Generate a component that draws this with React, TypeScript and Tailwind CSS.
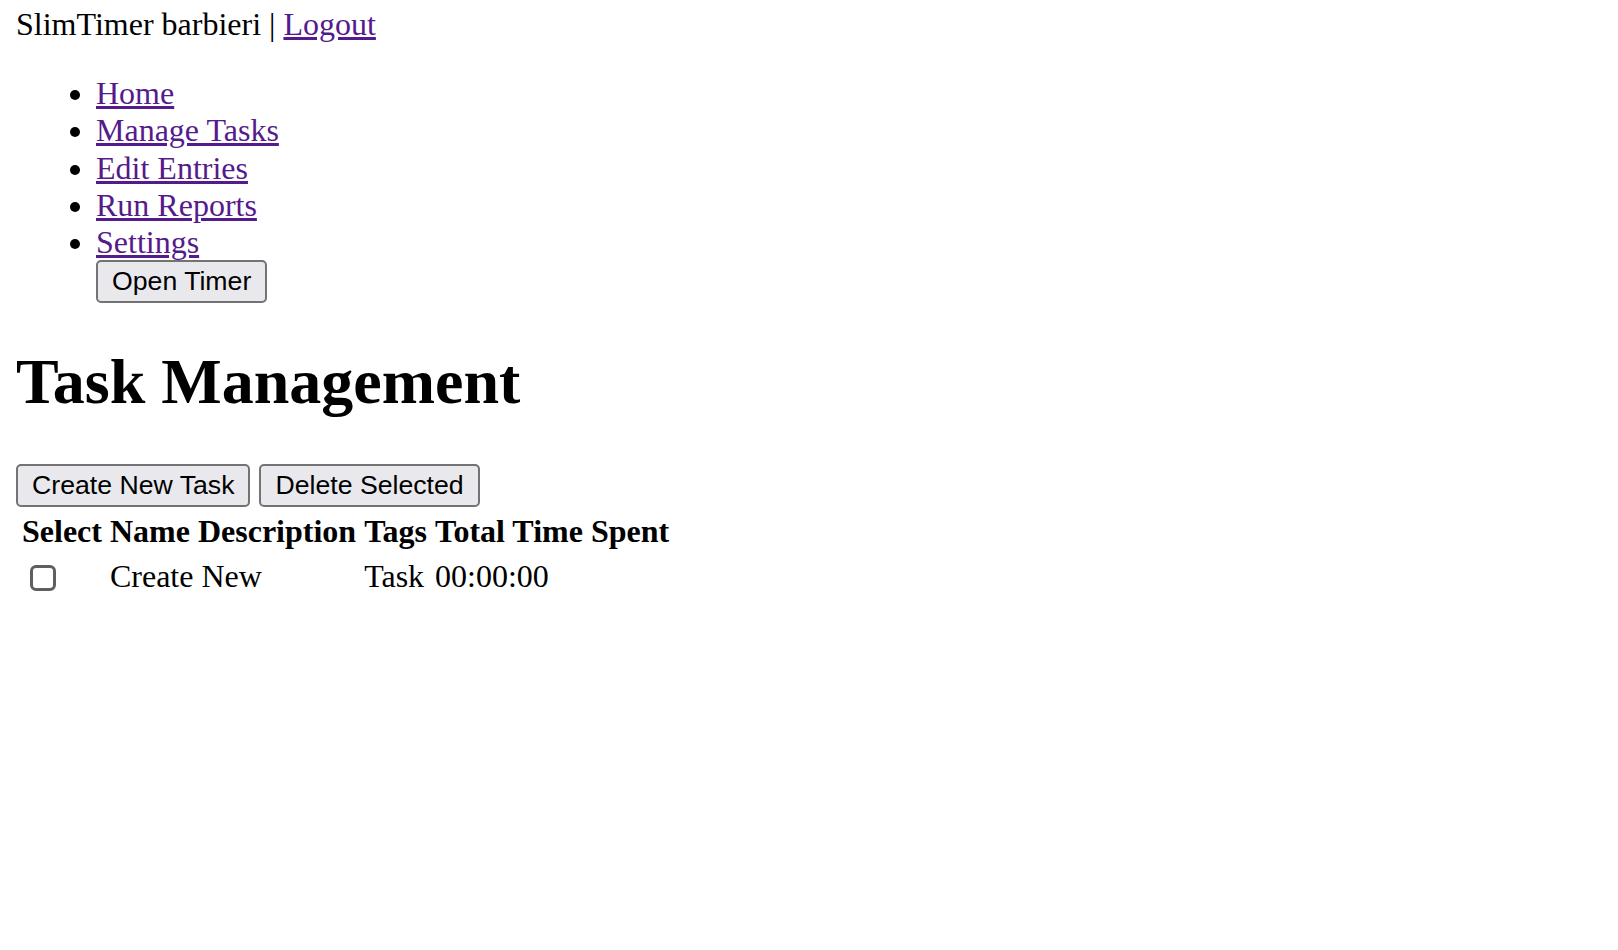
const serif = { fontFamily: '"Liberation Serif", "Times New Roman", serif' }

function NativeButton({ children }: { children: React.ReactNode }) {
  return (
    <button
      type="button"
      className="inline-flex h-[43px] items-center rounded-[5px] border-2 border-[#737373] bg-[#e9e9ed] px-[14px] align-bottom text-[26.67px] leading-none text-black font-['Liberation_Sans',Arial,sans-serif]"
    >
      {children}
    </button>
  )
}

const navLinks = ['Home', 'Manage Tasks', 'Edit Entries', 'Run Reports', 'Settings']

export default function App() {
  return (
    <div
      className="min-h-[950px] w-full bg-white px-4 pt-[6px] text-[32px] leading-[37.2px] text-black"
      style={serif}
    >
      <div>
        SlimTimer barbieri |{' '}
        <a href="#" className="text-[#551a8b] underline">
          Logout
        </a>
      </div>

      <ul className="mt-[32px] list-disc pl-[80px]">
        {navLinks.map((l) => (
          <li key={l}>
            <a href="#" className="text-[#551a8b] underline">
              {l}
            </a>
          </li>
        ))}
        <div className="-mt-[1px]">
          <NativeButton>Open Timer</NativeButton>
        </div>
      </ul>

      <h1 className="mt-[42px] text-[64px] font-bold leading-[1.149]">Task Management</h1>

      <div className="mt-[45px] flex gap-[9px]">
        <NativeButton>Create New Task</NativeButton>
        <NativeButton>Delete Selected</NativeButton>
      </div>

      <table className="border-separate border-spacing-[4px]">
        <thead>
          <tr className="font-bold">
            <th className="p-[2px]">Select</th>
            <th className="p-[2px]">Name</th>
            <th className="p-[2px]">Description</th>
            <th className="p-[2px]">Tags</th>
            <th className="p-[2px]">Total Time Spent</th>
          </tr>
        </thead>
        <tbody>
          <tr>
            <td className="p-[2px]">
              <input
                type="checkbox"
                className="ml-[8px] mt-[3px] block h-[26px] w-[26px] appearance-none rounded-[6px] border-[3px] border-[#5f5f5f] bg-white"
              />
            </td>
            <td className="p-[2px]" colSpan={2}>
              Create New
            </td>
            <td className="p-[2px]">Task</td>
            <td className="p-[2px]">00:00:00</td>
          </tr>
        </tbody>
      </table>
    </div>
  )
}
